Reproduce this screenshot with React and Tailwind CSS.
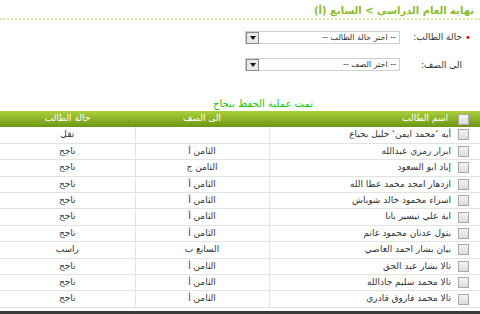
import React from "react";

const rows = [
  ["أيه ‘محمد ايمن‘ خليل بحياع", "", "نقل"],
  ["ابرار رمزي عبدالله", "الثامن أ", "ناجح"],
  ["إياد ابو السعود", "الثامن ج", "ناجح"],
  ["ازدهار امجد محمد عطا الله", "الثامن أ", "ناجح"],
  ["اسراء محمود خالد شوباش", "الثامن أ", "ناجح"],
  ["اية علي تيسير بانا", "الثامن أ", "ناجح"],
  ["بتول عدنان محمود غانم", "الثامن أ", "ناجح"],
  ["بيان بشار احمد العاصي", "السابع ب", "راسب"],
  ["تالا بشار عبد الحق", "الثامن أ", "ناجح"],
  ["تالا محمد سليم جادالله", "الثامن أ", "ناجح"],
  ["تالا محمد فاروق قادري", "الثامن أ", "ناجح"],
];

function Check() {
  return (
    <span className="inline-block w-[11px] h-[11px] border border-[#a8a8a8] bg-gradient-to-b from-[#f4f4f4] to-[#dcdcdc] shrink-0"></span>
  );
}

function FakeSelect({ text }) {
  return (
    <div className="w-[155px] h-[13px] border border-[#cfcfcf] bg-white flex items-center justify-between pr-[3px]">
      <span className="text-[8px] leading-[11px] text-[#333]">{text}</span>
      <span className="w-[13px] h-[12px] border border-[#8a8a8a] bg-[#e8e8e8] flex items-center justify-center">
        <svg width="6" height="4" viewBox="0 0 6 4"><path d="M0 0h6L3 4z" fill="#111" /></svg>
      </span>
    </div>
  );
}

export default function App() {
  return (
    <div dir="rtl" className="w-[480px] h-[314px] bg-white overflow-hidden relative" style={{ fontFamily: '"DejaVu Sans", sans-serif' }}>
      <div className="pt-[4px] pr-[6px] h-[20px] border-b-2 border-dotted border-[#dbe7a0]">
        <div className="text-[10px] leading-[13px] font-bold text-[#8cbc28]">نهاية العام الدراسي &gt; السابع (أ)</div>
      </div>
      <div className="mt-[11px] flex items-center pr-[6px] h-[13px]">
        <span className="w-[12px] text-center text-[#e00000] text-[10px] leading-[10px]">•</span>
        <span className="w-[62px] text-[9px] text-[#333] leading-[13px]">حالة الطالب:</span>
        <FakeSelect text="-- اختر حالة الطالب --" />
      </div>
      <div className="mt-[14px] flex items-center pr-[6px] h-[13px]">
        <span className="w-[12px]"></span>
        <span className="w-[62px] text-[9px] text-[#333] leading-[13px] pt-[2px]">الى الصف:</span>
        <FakeSelect text="-- اختر الصف --" />
      </div>
      <div className="mt-[26px] pr-[167px] text-[10px] leading-[13px] text-[#11c811]">تمت عملية الحفظ بنجاح</div>
      <table className="mt-[1px] w-[480px] border-collapse table-fixed text-[9px] text-[#333]">
        <colgroup>
          <col className="w-[211px]" />
          <col className="w-[134px]" />
          <col className="w-[135px]" />
        </colgroup>
        <thead>
          <tr className="h-[16px] bg-gradient-to-b from-[#acd03c] to-[#6c9612] text-white">
            <th className="font-normal text-right p-0 pr-[11px]">
              <div className="flex items-center gap-[10px]"><Check /><span>اسم الطالب</span></div>
            </th>
            <th className="font-normal text-center p-0">الى الصف</th>
            <th className="font-normal text-center p-0">حالة الطالب</th>
          </tr>
        </thead>
        <tbody>
          {rows.map((r, i) => (
            <tr key={i} className="h-[16.4px] border-b border-[#e2e2e2]">
              <td className="p-0 pr-[11px] border-l border-[#e2e2e2]">
                <div className="flex items-center gap-[7px]"><Check /><span>{r[0]}</span></div>
              </td>
              <td className="p-0 text-center border-l border-[#e2e2e2]">{r[1]}</td>
              <td className="p-0 text-center">{r[2]}</td>
            </tr>
          ))}
        </tbody>
      </table>
      <div className="absolute bottom-0 left-0 w-[480px] h-[3px] bg-[#3a3a3a]"></div>
    </div>
  );
}
